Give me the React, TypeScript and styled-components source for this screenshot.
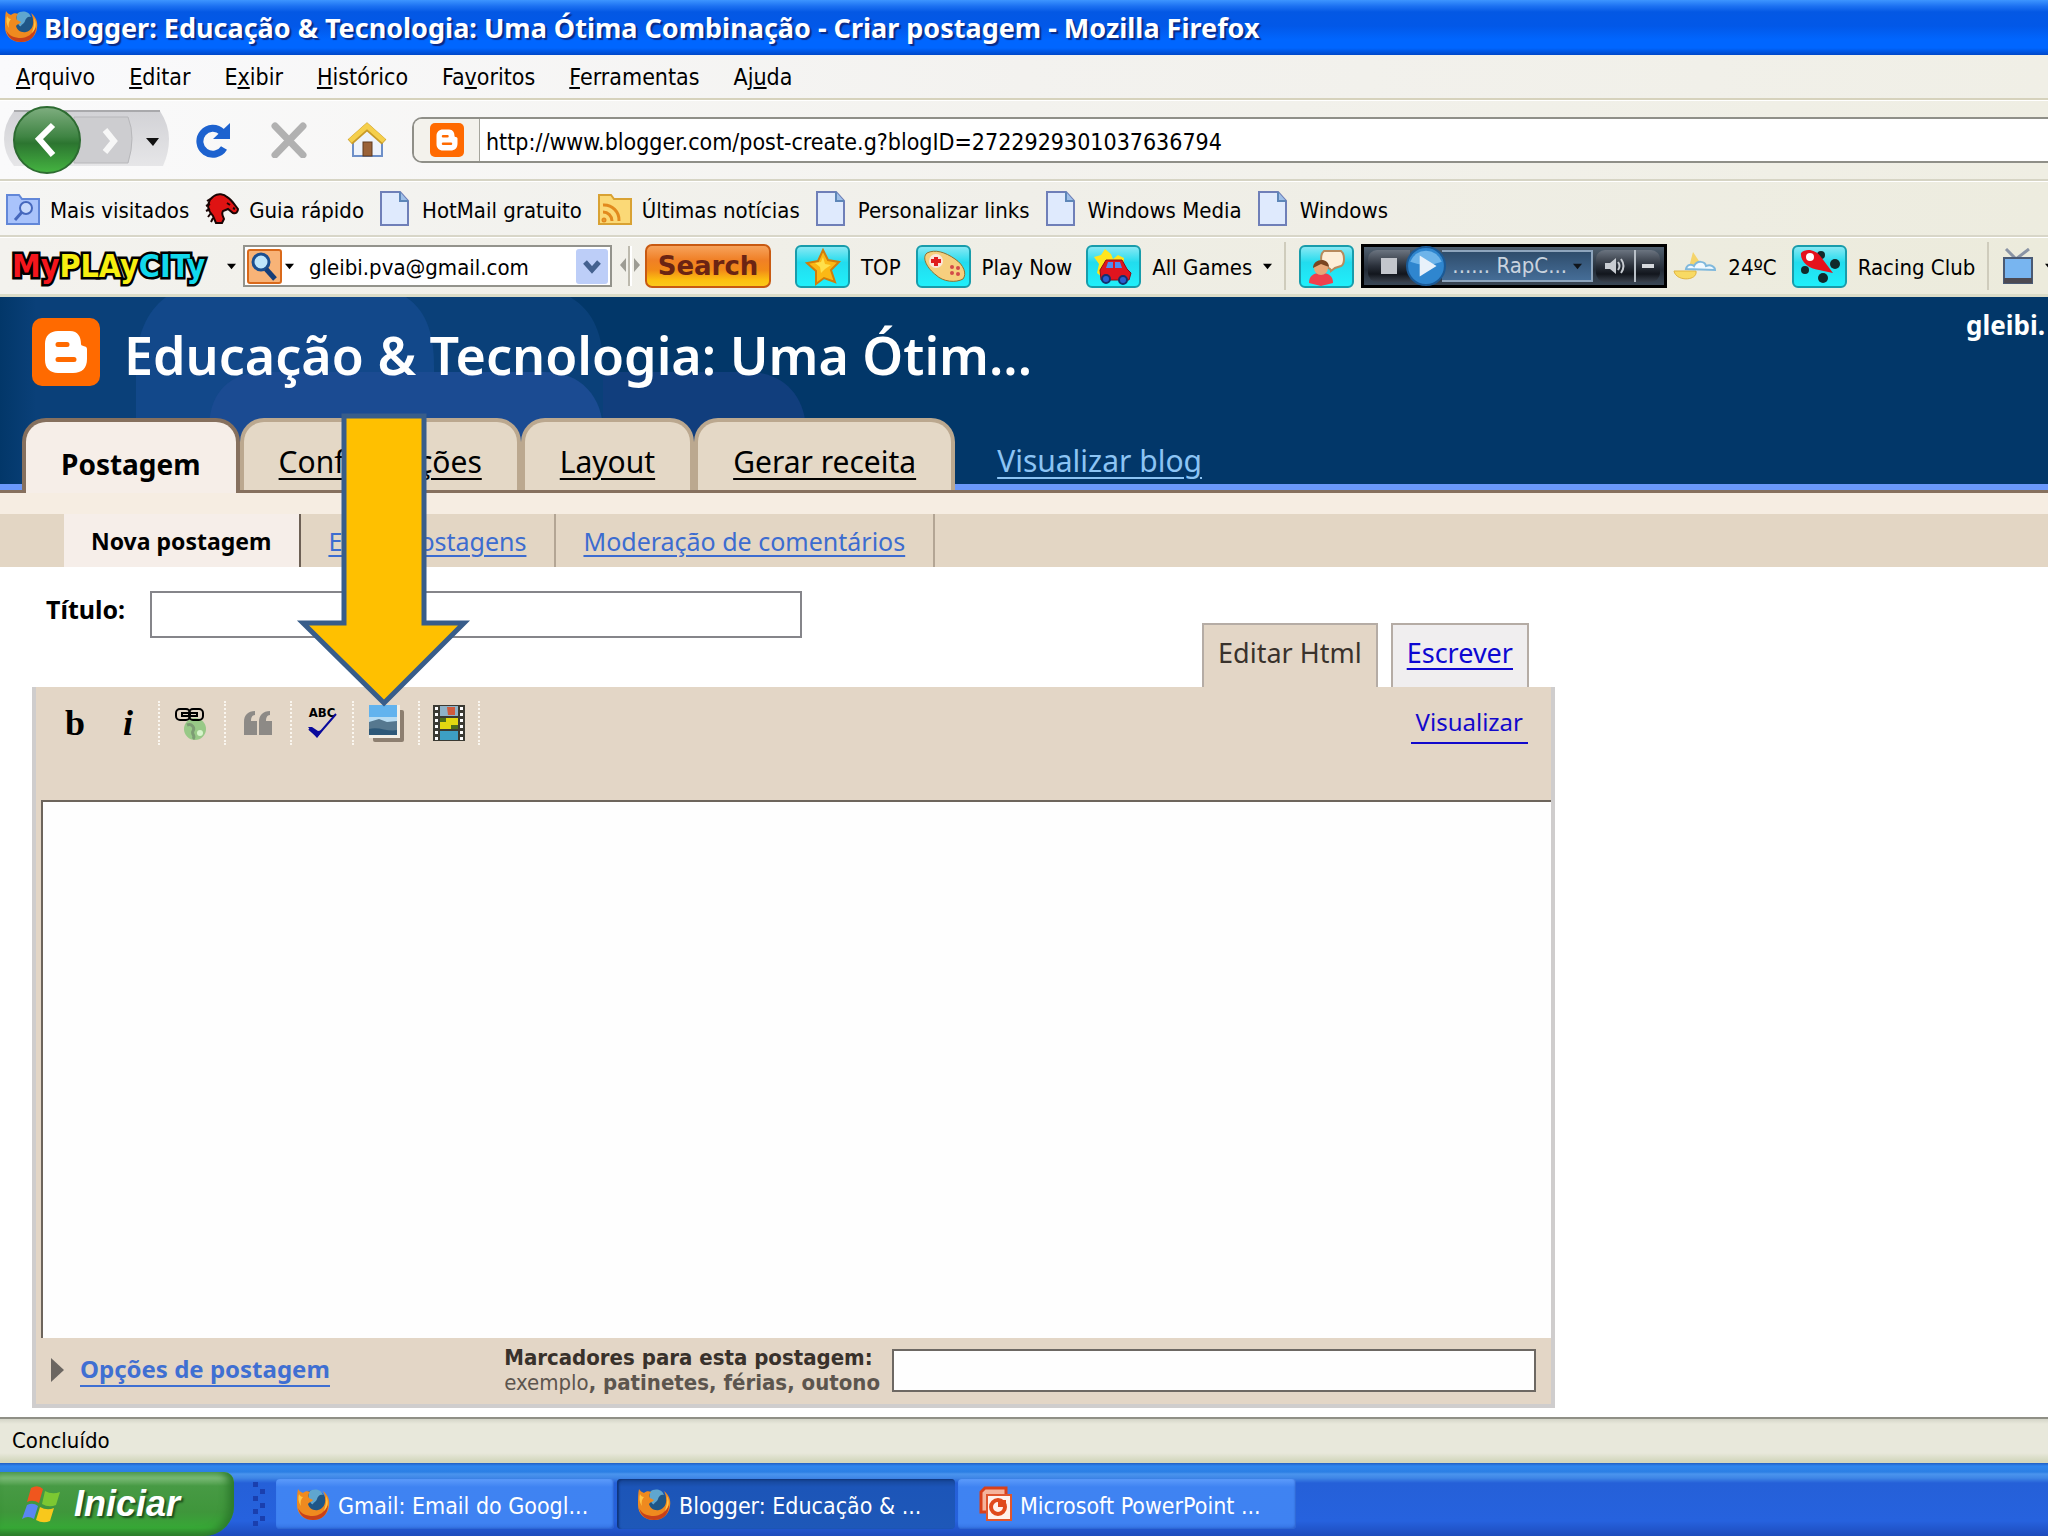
import React from "react";
import styled, { createGlobalStyle, css } from "styled-components";

const ui = `"DejaVu Sans Condensed", "Open Sans", sans-serif`;
const blog = `"Noto Sans", "Open Sans", sans-serif`;
const black = `"DejaVu Sans", sans-serif`;

const GlobalStyle = createGlobalStyle`
  *, *::before, *::after { box-sizing: border-box; }
  html, body { margin: 0; }
  body { background: #fff; color: #000; font-family: ${ui}; font-size: 22px; line-height: 28px; overflow: hidden; }
  button, input, textarea { font: inherit; color: inherit; margin: 0; }
  button { border: 0; padding: 0; background: none; display: inline-flex; flex: none; align-items: center; white-space: nowrap; }
  svg { display: block; flex: none; }
  h1 { margin: 0; }
`;

const Window = styled.div`
  min-height: 100vh;
  display: flex;
  flex-direction: column;
  overflow: hidden;
`;

/* text that sits beside an icon */
const Caption = styled.span`
  padding-top: 4px;
`;

/* ---------- browser chrome ---------- */

const TitleBar = styled.header`
  display: flex;
  align-items: center;
  gap: 6px;
  height: 55px;
  padding: 0 4px 4px;
  color: #fff;
  font: 700 27px/32px ${blog};
  white-space: nowrap;
  text-shadow: 2px 2px 1px #0a2a86;
  background: linear-gradient(#3d95ff 0, #1d72f2 6px, #0458e4 12px, #0258e8 26px, #0066ff 40px, #0066ff 48px, #0047c8 55px);
`;

const MenuBar = styled.nav`
  display: flex;
  align-items: center;
  gap: 34px;
  height: 45px;
  padding: 0 16px;
  font-size: 23px;
  background: linear-gradient(90deg, #fafafc, #f3f2ef 50%, #f0efe6);
  border-bottom: 2px solid #d6d2bc;
`;

const NavBar = styled.div`
  display: flex;
  align-items: center;
  height: 81px;
  padding-left: 4px;
  background: linear-gradient(90deg, #fafafb, #f3f2ee 50%, #efeee3);
  border-top: 1px solid #fff;
  border-bottom: 2px solid #d6d4c4;
`;

const HistoryButtons = styled.div`
  display: flex;
  margin-right: 25px;
`;

const NavButton = styled.button`
  margin-right: 40px;
`;

const AddressBar = styled.label`
  flex: 1;
  display: flex;
  height: 46px;
  margin-left: -15px;
  border: 2px solid #8f8f88;
  border-right: 0;
  border-radius: 10px 0 0 10px;
  background: #fff;
  overflow: hidden;
`;

const SiteBadge = styled.span`
  display: flex;
  align-items: center;
  justify-content: center;
  width: 66px;
  background: #f3f2ec;
  border-right: 1px solid #a5a59c;
`;

const AddressInput = styled.input`
  flex: 1;
  border: 0;
  padding: 4px 6px 0;
  font-size: 23px;
  background: transparent;
  outline: 0;
`;

const BookmarkBar = styled.nav`
  display: flex;
  align-items: center;
  gap: 16px;
  height: 56px;
  padding-left: 6px;
  background: linear-gradient(90deg, #f5f5f3, #f0efe9 50%, #edecdf);
  border-top: 1px solid #fff;
  border-bottom: 2px solid #d8d6c8;
`;

const Bookmark = styled.button<{ $wide?: boolean }>`
  gap: ${(p) => (p.$wide ? 13 : 10)}px;
`;

const Toolbar = styled.div`
  display: flex;
  align-items: center;
  height: 60px;
  padding-left: 12px;
  white-space: nowrap;
  background: linear-gradient(90deg, #f3f2ee, #efeee6 50%, #ecebdc);
  border-top: 1px solid #fff;
  border-bottom: 3px solid #dbdcc8;
`;

const CityLogo = styled.span`
  flex: none;
  width: 196px;
  font: 700 32px/36px ${ui};
  -webkit-text-stroke: 5px #000;
  paint-order: stroke fill;
`;

const Tint = styled.span<{ $c: string }>`
  color: ${(p) => p.$c};
`;

const ToolbarMenu = styled.button`
  justify-content: flex-end;
  width: 28px;
`;

const SearchCombo = styled.div`
  display: flex;
  flex: none;
  align-items: center;
  width: 369px;
  height: 42px;
  margin: 0 8px 0 7px;
  padding: 0 2px;
  gap: 3px;
  border: 2px solid #93938c;
  background: #fff;
`;

const ComboInput = styled.input`
  flex: 1;
  min-width: 0;
  border: 0;
  outline: 0;
  padding: 4px 0 0 12px;
`;

const SearchButton = styled.button`
  justify-content: center;
  width: 126px;
  height: 44px;
  margin: 0 24px 0 5px;
  border: 2px solid #c85a12;
  border-radius: 7px;
  color: #6b2413;
  font: 700 26px/30px ${black};
  background: linear-gradient(#f7a35c 0, #f08026 35%, #f28a18 60%, #fcc010 85%, #fbc91a);
`;

const GameButton = styled.button<{ $end?: number }>`
  gap: 11px;
  margin-right: ${(p) => p.$end ?? 15}px;
`;

const Divider = styled.span`
  flex: none;
  width: 2px;
  height: 48px;
  margin-right: 13px;
  background: #cfccbc;
`;

const Player = styled.div`
  display: flex;
  align-items: center;
  flex: none;
  width: 306px;
  height: 44px;
  margin: 0 6px 0 7px;
  padding: 0 4px;
  border: 3px solid #000;
  background: linear-gradient(#50606f, #232b36 60%, #3a4755);
`;

const PlayerKey = styled.button<{ $w: number; $side?: "left" | "right" }>`
  justify-content: center;
  width: ${(p) => p.$w}px;
  height: 32px;
  border-left: ${(p) => (p.$side === "right" ? "2px solid #b9c0c8" : "0")};
  border-radius: ${(p) => (p.$side === "right" ? "0 9px 9px 0" : "9px 0 0 9px")};
  background: linear-gradient(#6b7480, #2a303a 50%, #12161d 75%, #3a414c);
`;

const PlayKey = styled.button`
  margin: 0 -4px 0 -4px;
  z-index: 1;
`;

const Station = styled.span`
  flex: 1;
  display: flex;
  align-items: center;
  justify-content: space-between;
  height: 32px;
  margin-right: 3px;
  padding: 0 9px 0 10px;
  color: #c9d3de;
  border: 2px solid #8ea5bd;
  border-left: 0;
  background: linear-gradient(#2f4d6c, #456d97);
`;

/* ---------- blog header ---------- */

const BlogHeader = styled.header`
  display: flex;
  flex-direction: column;
  position: relative;
  height: 196px;
  background: #023769;
  border-bottom: 3px solid #86705e;
`;

const HeaderArt = styled.svg`
  position: absolute;
  left: 0;
  bottom: 6px;
`;

const BlueRule = styled.span`
  position: absolute;
  left: 0;
  right: 0;
  bottom: 0;
  height: 6px;
  background: #6a98fb;
`;

const Brand = styled.div`
  display: flex;
  align-items: center;
  position: relative;
  gap: 24px;
  height: 121px;
  padding: 0 0 11px 32px;
`;

const BlogName = styled.h1`
  flex: 1;
  padding-top: 6px;
  color: #fff;
  font: 600 52px/64px ${blog};
`;

const Account = styled.span`
  align-self: flex-start;
  width: 82px;
  padding-top: 13px;
  color: #fff;
  font: 700 26px/30px ${blog};
`;

const Tabs = styled.nav`
  display: flex;
  position: relative;
  flex: 1;
  padding-left: 22px;
  font: 30px/36px ${blog};
`;

const Tab = styled.a<{ $active?: boolean }>`
  display: flex;
  align-items: center;
  padding: 12px 35px 0;
  border: 4px solid #bba88f;
  border-bottom: 0;
  border-radius: 24px 24px 0 0;
  color: #000;
  background: #e4d8c6;
  text-decoration: underline;
  text-decoration-thickness: 2px;
  text-underline-offset: 5px;
  ${(p) =>
    p.$active &&
    css`
      margin-bottom: -3px;
      border-color: #86705e;
      background: #f6eee8;
      font-size: 28px;
      font-weight: 700;
      text-decoration: none;
    `}
`;

const ViewBlog = styled.a`
  align-self: center;
  margin-left: 42px;
  padding-top: 14px;
  color: #8cc4f4;
  text-decoration-thickness: 2px;
  text-underline-offset: 5px;
`;

const SubNav = styled.nav`
  display: flex;
  height: 74px;
  padding: 21px 0 0 64px;
  font: 25px/30px ${blog};
  background: linear-gradient(#f6ede2 21px, #e3d6c4 21px);
`;

const SubItem = styled.a<{ $active?: boolean }>`
  display: flex;
  align-items: center;
  padding: 0 28px 0 27px;
  border-right: 2px solid #b3a594;
  color: #3c6cd0;
  text-decoration-thickness: 2px;
  text-underline-offset: 4px;
  ${(p) =>
    p.$active &&
    css`
      color: #000;
      font-size: 23px;
      font-weight: 700;
      text-decoration: none;
      background: #f6eee9;
      border-color: #6d6055;
    `}
`;

/* ---------- post editor ---------- */

const Page = styled.main`
  flex: 1;
  display: flex;
  flex-direction: column;
  padding: 24px 493px 9px 32px;
  font-family: ${blog};
`;

const TitleRow = styled.label`
  display: flex;
  align-items: flex-start;
  gap: 25px;
  padding-left: 14px;
  height: 32px;
  font-weight: 700;
  font-size: 25px;
  line-height: 36px;
`;

const TitleInput = styled.input`
  width: 652px;
  height: 47px;
  border: 2px solid #85858a;
  background: #fff;
`;

const Modes = styled.div`
  display: flex;
  justify-content: flex-end;
  gap: 13px;
  padding-right: 26px;
`;

const Mode = styled.a<{ $active?: boolean }>`
  height: 64px;
  padding: 12px 14px 0;
  border: 2px solid #b5aca5;
  border-bottom: 0;
  font-size: 27px;
  line-height: 32px;
  color: ${(p) => (p.$active ? "#39322c" : "#0d07d2")};
  background: ${(p) => (p.$active ? "#e3d6c6" : "#f0eeef")};
  text-decoration: ${(p) => (p.$active ? "none" : "underline 2px")};
  text-underline-offset: 5px;
`;

const Editor = styled.section`
  flex: 1;
  display: flex;
  flex-direction: column;
  border: 4px solid #cfcdcd;
  border-top: 0;
  padding-left: 5px;
  background: #e3d6c6;
`;

const EditorTools = styled.div`
  display: flex;
  align-items: flex-start;
  height: 113px;
  padding: 14px 23px 0 11px;
`;

const Tool = styled.button<{ $w: number; $rule?: boolean }>`
  justify-content: center;
  width: ${(p) => p.$w}px;
  height: 44px;
  border-right: ${(p) => (p.$rule ? "2px dotted #faf6ef" : "0")};
`;

const Letter = styled.span<{ $italic?: boolean }>`
  font: ${(p) => (p.$italic ? "italic" : "normal")} 700 36px/40px "Liberation Serif", serif;
`;

const Preview = styled.a`
  margin-left: auto;
  padding: 5px 5px 4px;
  border-bottom: 2px solid #1209cc;
  color: #1209cc;
  font-size: 24px;
  line-height: 32px;
  text-decoration: none;
`;

const PostBody = styled.textarea`
  flex: 1;
  resize: none;
  border: 0;
  border-top: 2px solid #6d655c;
  border-left: 2px solid #6d655c;
  outline: 0;
  background: #fefefe;
`;

const EditorFooter = styled.div`
  display: flex;
  align-items: center;
  height: 66px;
  padding: 0 15px 2px 10px;
`;

const Options = styled.a`
  display: flex;
  align-items: center;
  gap: 16px;
  flex: 1;
  color: #3f6fd2;
  font-weight: 700;
  font-size: 24px;
  text-decoration: none;

  span { border-bottom: 2px solid #3f6fd2; line-height: 32px; }
`;

const LabelsField = styled.label`
  display: flex;
  align-items: center;
  gap: 12px;
  font: 700 22px/25px ${ui};
  color: #38312b;
`;

const Hint = styled.span`
  display: block;
  color: #5c554e;
`;

const Plain = styled.span`
  font-weight: 400;
`;

const LabelsInput = styled.input`
  width: 644px;
  height: 43px;
  border: 2px solid #6d6863;
  background: #fefefe;
`;

const Pointer = styled.svg`
  position: absolute;
  left: 296px;
  top: 413px;
  pointer-events: none;
`;

/* ---------- status bar and taskbar ---------- */

const StatusBar = styled.footer`
  height: 46px;
  padding: 8px 12px;
  border-top: 2px solid #8f8f86;
  background: linear-gradient(#d4d5c8 0, #e8e8db 5px, #e8e8db 34px, #d3d7bd 42px);
`;

const TaskBar = styled.footer`
  display: flex;
  align-items: center;
  gap: 3px;
  height: 73px;
  padding-top: 9px;
  background: linear-gradient(#1f5ec4 0, #2f86ee 3px, #2c7fe4 9px, #4a94ee 11px, #3f86e6 15px, #2560d8 20px, #2662de 58px, #1d4bbc 73px);
`;

const StartButton = styled.button`
  align-self: stretch;
  width: 234px;
  padding: 0 0 0 22px;
  gap: 12px;
  border-radius: 0 10px 30px 0;
  color: #fff;
  font: italic 700 36px/40px "Liberation Sans", sans-serif;
  text-shadow: 2px 2px 2px #1b4d1c;
  background: linear-gradient(#6db56c 0, #7cbc78 6px, #479a44 14px, #3f963b 40px, #37a836 56px, #2c7f2b);
  box-shadow: inset -6px 0 8px #2c7a2c;
`;

const Grip = styled.svg`
  margin: 0 6px 0 16px;
`;

const Task = styled.button<{ $active?: boolean }>`
  width: 338px;
  height: 50px;
  padding-left: 20px;
  gap: 8px;
  border-radius: 4px;
  color: #fff;
  font-size: 23px;
  background: ${(p) =>
    p.$active ? "linear-gradient(#164596, #1c55b8 8px, #1e58b8)" : "linear-gradient(#5c9bfb, #3f83f2 8px, #3f82f2 44px, #3574e4)"};
  box-shadow: inset ${(p) => (p.$active ? "2px 1px 2px #10357c" : "-1px -1px 2px #2c62cf")};
`;

/* ---------- drawings ---------- */

const Caret = ({ size = 9, color = "#000" }: { size?: number; color?: string }) => (
  <svg width={size} height={size} viewBox="0 0 10 10"><path d="M0 2h10L5 8z" fill={color} /></svg>
);

const BloggerMark = ({ size }: { size: number }) => (
  <svg width={size} height={size} viewBox="0 0 68 68">
    <rect width="68" height="68" rx="10" fill="#ff6a00" />
    <path d="M26 13h12c8 0 11 6 11 13 0 3 6 1 6 5v10c0 9-5 14-14 14H26c-8 0-13-5-13-13V26c0-8 5-13 13-13z" fill="#fff" />
    <path d="M26 26.500h9M26 41.500h16" stroke="#ff6a00" strokeWidth="5" strokeLinecap="round" />
  </svg>
);

const Firefox = ({ size = 34 }: { size?: number }) => (
  <svg width={size} height={size} viewBox="0 0 34 34">
    <circle cx="18" cy="15" r="12" fill="#1f5687" />
    <path d="M13 5c4-4 12-3 14 3-3-1-5 1-6 4s-3 3-4 5-6-5-4-12z" fill="#5fa6cf" />
    <path d="M2 2c1 2 3 3 5 4 2-2 5-2 7-1-2 2-2 4-1 6l4 2c-1 2-4 2-5 4 1 4 5 7 10 6 5-1 8-6 7-12 0-3-1-5-2-7 5 4 7 9 6 15-1 8-7 14-16 14C8 33 1 27 1 18 1 11 1 6 2 2z" fill="#ef8a1f" />
    <path d="M2 21c3 6 8 8 15 8 6 0 12-4 15-11 0 9-6 15-15 15C9 33 4 29 2 21z" fill="#c8401a" />
    <path d="M3 7c1 2 2 3 4 3-2 2-3 5-2 9-3-4-3-8-2-12zM30 9c3 5 2 11-2 15 1-4 3-9 2-15z" fill="#ffc545" />
  </svg>
);

const BackForward = () => (
  <svg width="166" height="72" viewBox="0 0 166 72">
    <defs>
      <linearGradient id="green" x2="0" y2="1"><stop stopColor="#7fae80" /><stop offset=".45" stopColor="#3f8443" /><stop offset=".55" stopColor="#2c7530" /><stop offset="1" stopColor="#45b541" /></linearGradient>
      <linearGradient id="silver" x2="0" y2="1"><stop stopColor="#d2d2d6" /><stop offset="1" stopColor="#e6e6e8" /></linearGradient>
    </defs>
    <path d="M10 7h146q9 14 9 28t-6 27H10Q0 50 0 35T10 7z" fill="url(#silver)" />
    <path d="M10 7h146" stroke="#a9a9ac" strokeWidth="2" />
    <path d="M70 13h54q8 20 0 46H70z" fill="#cdcdd0" stroke="#b7b7ba" />
    <path d="m101 26 9 11-9 11" fill="none" stroke="#f7f7f7" strokeWidth="6" />
    <circle cx="43" cy="36" r="33" fill="url(#green)" stroke="#2d6b31" strokeWidth="2" />
    <path d="M49 21 35 35l14 16" fill="none" stroke="#fff" strokeWidth="6" />
    <path d="M142 34h13l-6 8z" fill="#111" />
  </svg>
);

const Reload = () => (
  <svg width="36" height="36" viewBox="0 0 36 36">
    <path d="M29 26a13 13 0 1 1-2-16" fill="none" stroke="#1d62cf" strokeWidth="7" />
    <path d="M35 1v16H18z" fill="#1d62cf" />
  </svg>
);

const Stop = () => (
  <svg width="36" height="36" viewBox="0 0 36 36"><path d="m4 4 28 29M32 4 4 33" stroke="#b1b1b1" strokeWidth="7" strokeLinecap="round" /></svg>
);

const Home = () => (
  <svg width="40" height="36" viewBox="0 0 40 36">
    <path d="M6 18v16h29V18L20 6z" fill="#eef3fb" stroke="#6d8fc8" strokeWidth="2" />
    <rect x="16" y="20" width="9" height="14" fill="#9a6238" stroke="#5e3a20" />
    <path d="M3 20 20 5l17 15" fill="none" stroke="#c89a28" strokeWidth="7" />
    <path d="M3 19 20 4l17 15" fill="none" stroke="#f5cf4c" strokeWidth="5" />
  </svg>
);

const FolderIcon = ({ rss }: { rss?: boolean }) => {
  const c = rss ? ["#fbd977", "#d9a233"] : ["#a9c3fb", "#6287d8"];
  return (
    <svg width="34" height="32" viewBox="0 0 34 32">
      <path d="M1 2h12l3 4h17v25H1z" fill={c[0]} stroke={c[1]} strokeWidth="2" />
      {rss ? (
        <g fill="none" stroke="#e28a1e" strokeWidth="3"><path d="M5 12a15 15 0 0 1 16 16M5 19a9 9 0 0 1 9 9" /><circle cx="6" cy="27" r="1" /></g>
      ) : (
        <g fill="none" stroke="#4668bd" strokeWidth="2"><circle cx="20" cy="15" r="6" fill="#c8dafc" /><path d="m16 19-7 8" strokeWidth="3" /></g>
      )}
    </svg>
  );
};

const HorseIcon = () => (
  <svg width="34" height="32" viewBox="0 0 34 32">
    <path d="M9 3c4-3 10-2 13 1 4 2 7 7 11 12 0 3-2 5-5 4l-5-4-5 2c-2 3 0 5 1 8l-2 4h-6l-3-7-3-4C1 14 4 6 9 3z" fill="#df1313" stroke="#1a0505" strokeWidth="2" />
    <path d="M7 5 2 8m3 3-4 2m4 3-4 2m5 2-3 4m5 1-2 4M22 10l3 2M28 15l2 1" stroke="#1a0505" strokeWidth="2" />
  </svg>
);

const PageIcon = () => (
  <svg width="29" height="35" viewBox="0 0 29 35">
    <path d="M1 1h19l8 9v24H1z" fill="#dfeafd" stroke="#6f7fb8" strokeWidth="2" />
    <path d="M20 1v9h8" fill="#9fc0e8" stroke="#5d86b8" strokeWidth="2" />
  </svg>
);

const Lens = () => (
  <svg width="35" height="35" viewBox="0 0 35 35">
    <rect x="1" y="1" width="33" height="33" rx="2" fill="#f8b377" stroke="#d9691a" strokeWidth="2" />
    <circle cx="14" cy="13" r="8" fill="#bfe6fb" stroke="#1b4f90" strokeWidth="3" />
    <path d="m19 20 9 10" stroke="#173e78" strokeWidth="5" />
  </svg>
);

const DropKey = () => (
  <svg width="32" height="35" viewBox="0 0 32 35">
    <rect width="32" height="35" rx="3" fill="#bdcef8" />
    <path d="m9 13 7 8 7-8" fill="none" stroke="#44618f" strokeWidth="5" />
  </svg>
);

const Splitter = () => (
  <svg width="20" height="40" viewBox="0 0 20 40">
    <path d="M9 0v40" stroke="#bdbaae" strokeWidth="2" /><path d="M11 0v40" stroke="#fff" strokeWidth="2" />
    <path d="M6 12v14l-6-7zM14 12v14l6-7z" fill="#9d9c94" />
  </svg>
);

const Tile = ({ children }: { children: React.ReactNode }) => (
  <svg width="55" height="43" viewBox="0 0 55 43">
    <defs><linearGradient id="aqua" x2="0" y2="1"><stop stopColor="#8fe9f4" /><stop offset=".4" stopColor="#22dcee" /><stop offset="1" stopColor="#20f0fb" /></linearGradient></defs>
    <rect x="1" y="1" width="53" height="41" rx="5" fill="url(#aqua)" stroke="#189cab" strokeWidth="2" />
    {children}
  </svg>
);

const StarArt = () => (
  <g><path d="m28 5 5 10 11 2-8 8 4 12-11-4-8 6v-13l-9-8 11-2z" fill="#fbb815" stroke="#d17d0a" strokeWidth="2" /><path d="m28 12 2 7 6 1-6 4-4 4-1-6-5-4 6-1z" fill="#ffe04a" /></g>
);
const PadArt = () => (
  <g><path d="M11 8c8-4 18-1 28 6 9 6 12 15 8 20-7 4-20 3-27-4C12 24 5 13 11 8z" fill="#f6cf7e" stroke="#8d7030" />
    <circle cx="20" cy="16" r="7" fill="#fbe7da" /><path d="M20 12v9M15 16h10" stroke="#e01d1d" strokeWidth="4" /><g fill="#d24a4a"><circle cx="36" cy="22" r="2" /><circle cx="42" cy="23" r="2" /><circle cx="36" cy="28" r="2" /><circle cx="42" cy="29" r="2" /></g></g>
);
const CarArt = () => (
  <g><path d="m8 12 7-2 4-6 6 5 2 5 5-4 6 3-1 10-21 9-5-4 2-9z" fill="#ffe51c" /><path d="m14 25 6-10h16l5 9 4 4-2 7H15z" fill="#e0141e" stroke="#8b0c14" />
    <path d="M22 17h5v6h-7zM29 17h5l2 6h-7z" fill="#4f8df0" /><circle cx="20" cy="34" r="4" fill="#2a5fd0" stroke="#14306e" strokeWidth="2" /><circle cx="37" cy="35" r="4" fill="#2a5fd0" stroke="#14306e" strokeWidth="2" /></g>
);
const ChatArt = () => (
  <g><path d="M25 6h17c4 3 4 13 0 15l-6 2-4 3c0-3-3-3-6-4-5-3-5-13-1-16z" fill="#fdeed8" stroke="#b78a5c" strokeWidth="2" />
    <path d="M10 38c0-7 4-10 12-10s12 3 12 10l-12 3z" fill="#f0404c" /><circle cx="22" cy="23" r="7" fill="#e8a878" /><path d="M14 23c0-10 16-11 16-1l-8-3z" fill="#7a4520" /></g>
);
const RacerArt = () => (
  <g><g fill="#102a2c"><circle cx="29" cy="10" r="4" /><circle cx="43" cy="19" r="5" /><circle cx="13" cy="25" r="4" /><circle cx="31" cy="33" r="5" /></g>
    <path d="M9 8c6-6 16-2 20 4l12 16-14-3c-10-1-19-8-18-17z" fill="#e5121d" /><circle cx="18" cy="12" r="4" fill="#fff" /></g>
);

const Weather = () => (
  <svg width="44" height="30" viewBox="0 0 44 30">
    <path d="m20 1 6 9 2 6H16z" fill="#f5d46a" /><path d="M1 20h22c2 10-20 11-22 0z" fill="#f8da63" stroke="#e0b440" />
    <path d="M13 18c1-5 6-5 8-3 3-6 11-5 12 0 5-2 9 1 9 4z" fill="#f2faff" stroke="#7fb8dc" strokeWidth="2" />
  </svg>
);

const Television = () => (
  <svg width="32" height="36" viewBox="0 0 32 36">
    <path d="m4 1 10 10L27 1" fill="none" stroke="#8a94a5" strokeWidth="3" />
    <rect x="2" y="10" width="28" height="25" fill="#78b5f0" stroke="#4a5a74" strokeWidth="2" /><path d="M2 30h28v5H2z" fill="#4d4a52" />
  </svg>
);

const HeaderShapes = () => (
  <HeaderArt width="960" height="187" viewBox="0 0 960 187" aria-hidden="true">
    <defs><linearGradient id="fade"><stop stopColor="#023769" /><stop offset=".06" stopColor="#0a4079" /><stop offset="1" stopColor="#0a4079" /></linearGradient></defs>
    <path d="M0 0h570c25 15 33 40 33 70v117H0z" fill="url(#fade)" />
    <path d="M136 187V70c0-30 10-55 30-70h240c22 15 28 40 28 70v117z" fill="#12488a" />
    <path d="M209 187v-55c0-36 20-57 56-57h280c36 0 58 25 58 60v52z" fill="#1b4b92" />
    <path d="M603 75h145c36 0 58 25 58 60v52H603z" fill="#113e7d" />
  </HeaderArt>
);

const LinkIcon = () => (
  <svg width="34" height="34" viewBox="0 0 34 34">
    <circle cx="20" cy="23" r="11" fill="#98c987" /><path d="M12 19c5-2 8 3 6 6s3 5 0 8" fill="none" stroke="#7d9c74" strokeWidth="3" /><circle cx="25" cy="27" r="3" fill="#d8f5cc" />
    <g fill="none" stroke="#000" strokeWidth="2"><rect x="1" y="3" width="14" height="11" rx="4" /><rect x="14" y="3" width="14" height="11" rx="4" /><path d="M7 7h15v3H7z" /></g>
  </svg>
);

const QuoteIcon = () => (
  <svg width="28" height="26" viewBox="0 0 28 26"><g fill="#8d8a86"><path d="M0 25V12C0 5 4 1 11 1v4C8 5 7 8 7 11h6v14z" /><path d="M15 25V12c0-7 4-11 11-11v4c-3 0-4 3-4 6h6v14z" /></g></svg>
);

const SpellMark = () => (
  <svg width="30" height="22" viewBox="0 0 30 22"><path d="m2 11 8 7L29 -4" fill="none" stroke="#0a0a9c" strokeWidth="2" /><path d="m1 9 9 11 6-8-5 1-6-4z" fill="#0a0a9c" /></svg>
);

const Spell = styled.span`
  display: grid;
  font: 700 13px/12px ${ui};
  svg { margin-top: -1px; overflow: visible; }
`;

const PhotoIcon = () => (
  <svg width="37" height="38" viewBox="0 0 37 38">
    <rect x="5" y="6" width="31" height="32" rx="2" fill="#8d7f70" /><rect x="1" y="1" width="31" height="33" fill="#f3efe6" />
    <path d="M1 1h28v30H1z" fill="#62b3ee" /><path d="M1 13h28v8H1z" fill="#b8dcf2" /><path d="m1 18 10-3 8 3 10-1v14H1z" fill="#56788f" /><path d="M1 25c9-3 19 3 28 1v5H1z" fill="#2d5878" />
  </svg>
);

const FilmIcon = () => (
  <svg width="32" height="36" viewBox="0 0 32 36">
    <path d="M0 0h32v36H0z" fill="#3b3a33" /><path d="M7 1h18v10H7z" fill="#8fb2c8" /><path d="M14 2h8v8h-7z" fill="#cf5a3c" /><path d="M7 13h18v11H7z" fill="#e2d811" /><path d="M7 13h6v4H7zM18 20h7v4h-7z" fill="#4d6d1b" /><path d="M7 26h18v9H7z" fill="#3d9fc4" />
    <path d="M3.500 2v34M28.500 2v34" stroke="#fff" strokeWidth="3" strokeDasharray="3 3" />
  </svg>
);

const WindowsFlag = () => (
  <svg width="40" height="38" viewBox="0 0 40 38">
    <path d="M9 3q7-4 12 1l-4 14q-6-4-12-1z" fill="#f0561e" /><path d="M23 6q7 4 15 1l-4 13q-7 3-14-1z" fill="#7cc832" />
    <path d="M5 20q6-3 11 1l-4 13q-6-4-12 0z" fill="#5a86f2" /><path d="M18 22q7 4 14 1l-4 13q-7 3-14-1z" fill="#f8c81c" />
  </svg>
);

const PowerPoint = () => (
  <svg width="34" height="36" viewBox="0 0 34 36">
    <path d="M7 2h21v24H3V6z" fill="#f5b49c" stroke="#d9401a" strokeWidth="3" /><path d="M9 9h24v25H9z" fill="#fff2ec" stroke="#e0562e" strokeWidth="2" />
    <circle cx="20" cy="21" r="7" fill="none" stroke="#e04a1c" strokeWidth="4" /><path d="M20 14h8v7h-8z" fill="#e04a1c" />
  </svg>
);

/* ---------- page ---------- */

const menus: [string, string, string][] = [
  ["", "A", "rquivo"], ["", "E", "ditar"], ["E", "x", "ibir"], ["", "H", "istórico"],
  ["Fa", "v", "oritos"], ["", "F", "erramentas"], ["Aj", "u", "da"],
];

export default function App() {
  return (
    <Window>
      <GlobalStyle />
      <TitleBar><Firefox /><Caption>Blogger: Educação &amp; Tecnologia: Uma Ótima Combinação - Criar postagem - Mozilla Firefox</Caption></TitleBar>
      <MenuBar>
        {menus.map(([a, k, b]) => <button key={a + k + b} type="button"><span>{a}<u>{k}</u>{b}</span></button>)}
      </MenuBar>
      <NavBar>
        <HistoryButtons><button type="button" aria-label="Voltar"><BackForward /></button></HistoryButtons>
        <NavButton type="button" aria-label="Recarregar"><Reload /></NavButton>
        <NavButton type="button" aria-label="Parar"><Stop /></NavButton>
        <NavButton type="button" aria-label="Página inicial"><Home /></NavButton>
        <AddressBar>
          <SiteBadge><BloggerMark size={34} /></SiteBadge>
          <AddressInput aria-label="Endereço" defaultValue="http://www.blogger.com/post-create.g?blogID=2722929301037636794" />
        </AddressBar>
      </NavBar>
      <BookmarkBar>
        <Bookmark type="button"><FolderIcon /><Caption>Mais visitados</Caption></Bookmark>
        <Bookmark type="button"><HorseIcon /><Caption>Guia rápido</Caption></Bookmark>
        <Bookmark type="button" $wide><PageIcon /><Caption>HotMail gratuito</Caption></Bookmark>
        <Bookmark type="button"><FolderIcon rss /><Caption>Últimas notícias</Caption></Bookmark>
        <Bookmark type="button" $wide><PageIcon /><Caption>Personalizar links</Caption></Bookmark>
        <Bookmark type="button" $wide><PageIcon /><Caption>Windows Media</Caption></Bookmark>
        <Bookmark type="button" $wide><PageIcon /><Caption>Windows</Caption></Bookmark>
      </BookmarkBar>
      <Toolbar>
        <CityLogo><Tint $c="#f4161c">My</Tint><Tint $c="#f6ee10">PLAy</Tint><Tint $c="#12d8ec">CITy</Tint></CityLogo>
        <ToolbarMenu type="button" aria-label="Menu MyPlayCity"><Caret /></ToolbarMenu>
        <SearchCombo>
          <Lens /><Caret />
          <ComboInput aria-label="Pesquisar" defaultValue="gleibi.pva@gmail.com" />
          <button type="button" aria-label="Abrir lista"><DropKey /></button>
        </SearchCombo>
        <Splitter />
        <SearchButton type="button">Search</SearchButton>
        <GameButton type="button"><Tile><StarArt /></Tile><Caption>TOP</Caption></GameButton>
        <GameButton type="button" $end={14}><Tile><PadArt /></Tile><Caption>Play Now</Caption></GameButton>
        <GameButton type="button" $end={12}><Tile><CarArt /></Tile><Caption>All Games</Caption><Caret /></GameButton>
        <Divider />
        <GameButton type="button" aria-label="Chat" $end={0}><Tile><ChatArt /></Tile></GameButton>
        <Player>
          <PlayerKey type="button" aria-label="Parar música" $w={42} $side="left"><svg width="16" height="16"><rect width="16" height="16" fill="#c3c6cc" /></svg></PlayerKey>
          <PlayKey type="button" aria-label="Tocar">
            <svg width="40" height="40" viewBox="0 0 38 38"><circle cx="19" cy="19" r="18" fill="#2f86cf" stroke="#1b5a96" strokeWidth="2" /><path d="M4 15a16 16 0 0 1 30 0q-15 6-30 0z" fill="#6db4ea" /><path d="m13 9 16 10-16 10z" fill="#e8f1fa" /></svg>
          </PlayKey>
          <Station><span>......</span><span>RapC...</span><Caret color="#10151c" /></Station>
          <PlayerKey type="button" aria-label="Volume" $w={38} $side="left">
            <svg width="22" height="20" viewBox="0 0 22 20"><path d="M1 7h5l6-5v16l-6-5H1z" fill="#c8ccd2" /><path d="M14 6q3 4 0 8M17 3q5 7 0 14" fill="none" stroke="#c8ccd2" strokeWidth="2" /></svg>
          </PlayerKey>
          <PlayerKey type="button" aria-label="Minimizar" $w={26} $side="right"><svg width="12" height="4"><rect width="12" height="4" fill="#d5d8dc" /></svg></PlayerKey>
        </Player>
        <GameButton type="button"><Weather /><Caption>24ºC</Caption></GameButton>
        <GameButton type="button" $end={12}><Tile><RacerArt /></Tile><Caption>Racing Club</Caption></GameButton>
        <Divider />
        <GameButton type="button" aria-label="TV"><Television /><Caret /></GameButton>
      </Toolbar>

      <BlogHeader>
        <HeaderShapes />
        <BlueRule />
        <Brand>
          <BloggerMark size={68} />
          <BlogName>Educação &amp; Tecnologia: Uma Ótim...</BlogName>
          <Account>gleibi.</Account>
        </Brand>
        <Tabs>
          <Tab href="#postagem" $active>Postagem</Tab>
          <Tab href="#config">Configurações</Tab>
          <Tab href="#layout">Layout</Tab>
          <Tab href="#receita">Gerar receita</Tab>
          <ViewBlog href="#blog">Visualizar blog</ViewBlog>
        </Tabs>
      </BlogHeader>
      <SubNav>
        <SubItem href="#nova" $active>Nova postagem</SubItem>
        <SubItem href="#editar">Editar postagens</SubItem>
        <SubItem href="#moderar">Moderação de comentários</SubItem>
      </SubNav>

      <Page>
        <TitleRow>Título:<TitleInput type="text" /></TitleRow>
        <Modes>
          <Mode href="#html" $active>Editar Html</Mode>
          <Mode href="#escrever">Escrever</Mode>
        </Modes>
        <Editor>
          <EditorTools>
            <Tool type="button" $w={46} aria-label="Negrito"><Letter>b</Letter></Tool>
            <Tool type="button" $w={62} $rule aria-label="Itálico"><Letter $italic>i</Letter></Tool>
            <Tool type="button" $w={66} $rule aria-label="Link"><LinkIcon /></Tool>
            <Tool type="button" $w={66} $rule aria-label="Citação"><QuoteIcon /></Tool>
            <Tool type="button" $w={62} $rule aria-label="Verificar ortografia"><Spell>ABC<SpellMark /></Spell></Tool>
            <Tool type="button" $w={66} $rule aria-label="Adicionar imagem"><PhotoIcon /></Tool>
            <Tool type="button" $w={60} $rule aria-label="Adicionar vídeo"><FilmIcon /></Tool>
            <Preview href="#visualizar">Visualizar</Preview>
          </EditorTools>
          <PostBody aria-label="Texto da postagem" />
          <EditorFooter>
            <Options href="#opcoes">
              <svg width="13" height="24" viewBox="0 0 13 24"><path d="M0 0v24l13-12z" fill="#6b6661" /></svg>
              <span>Opções de postagem</span>
            </Options>
            <LabelsField>
              <span>Marcadores para esta postagem:<Hint><Plain>exemplo</Plain>, patinetes, férias, outono</Hint></span>
              <LabelsInput type="text" />
            </LabelsField>
          </EditorFooter>
        </Editor>
      </Page>

      <StatusBar>Concluído</StatusBar>
      <TaskBar>
        <StartButton type="button"><WindowsFlag />Iniciar</StartButton>
        <Grip width="14" height="44" viewBox="0 0 14 44"><g fill="#1a3fae"><path d="M0 0h5v5H0zM7 7h5v5H7zM0 14h5v5H0zM7 21h5v5H7zM0 27h5v5H0zM7 34h5v5H7zM0 39h5v5H0z" /></g></Grip>
        <Task type="button"><Firefox /><Caption>Gmail: Email do Googl...</Caption></Task>
        <Task type="button" $active><Firefox /><Caption>Blogger: Educação &amp; ...</Caption></Task>
        <Task type="button"><PowerPoint /><Caption>Microsoft PowerPoint ...</Caption></Task>
      </TaskBar>

      <Pointer width="176" height="296" viewBox="0 0 176 296" aria-hidden="true">
        <path d="M48 3h80v207h40L88 290 7 210h41z" fill="#ffc000" stroke="#385d8a" strokeWidth="5" />
      </Pointer>
    </Window>
  );
}
